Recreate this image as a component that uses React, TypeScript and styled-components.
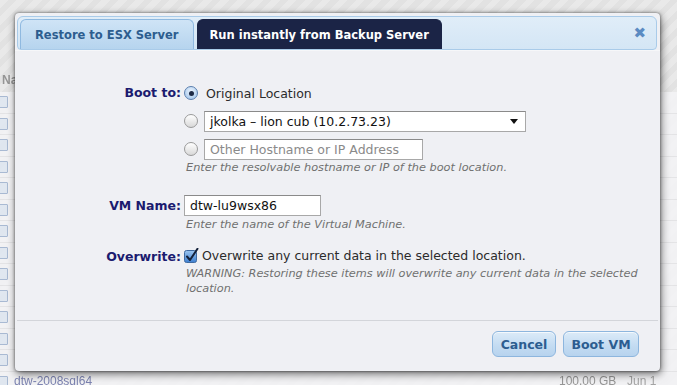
import React from "react";
import styled, { createGlobalStyle } from "styled-components";

const Global = createGlobalStyle`
  html, body { margin: 0; padding: 0; }
  body { width: 677px; height: 385px; overflow: hidden; font-family: "DejaVu Sans", "Noto Sans", sans-serif; }
`;

const Page = styled.div`
  position: relative;
  width: 677px;
  height: 385px;
  overflow: hidden;
  background: repeating-linear-gradient(135deg, #e9e9e9 0 6px, #e2e2e2 6px 12px);
`;

const BgTable = styled.div`
  display: flex;
  flex-direction: column;
  padding-top: 72px;
  filter: blur(0.6px);
  opacity: 0.85;
`;

const BgHead = styled.div`
  height: 20px;
  padding-left: 2px;
  font: bold 12px "Liberation Sans", sans-serif;
  color: #888;
  line-height: 16px;
`;

const BgRow = styled.div`
  height: 21.5px;
  box-sizing: border-box;
  flex: none;
  display: flex;
  align-items: center;
  font: 12px/13px "Liberation Sans", sans-serif;
  color: #6a72a8;
  border-bottom: 1px solid #e4e4e6;
  background: #f4f4f6;
`;

const BgIcon = styled.span`
  width: 8px;
  height: 10px;
  margin-left: -2px;
  border: 1px solid #9fb2d0;
  background: #dfe7f2;
  border-radius: 1px;
`;

const BgName = styled.span`
  margin-left: 6px;
  width: 545px;
`;

const BgSize = styled.span`
  width: 68px;
  color: #888;
`;

const BgDate = styled.span`
  color: #999;
`;

const Dialog = styled.div`
  position: absolute;
  left: 15px;
  top: 13px;
  width: 645px;
  height: 358px;
  box-sizing: border-box;
  background: #eff0f4;
  border-radius: 4px;
  box-shadow: 0 0 3px rgba(0,0,0,0.55), 1px 3px 8px rgba(0,0,0,0.55);
  display: flex;
  flex-direction: column;
  overflow: hidden;
`;

const TabBar = styled.div`
  margin: 3px 3px 0 2px;
  height: 34px;
  box-sizing: border-box;
  background: linear-gradient(#e0edf8, #d4e6f5);
  border: 1px solid #a9cbe9;
  border-radius: 6px 6px 4px 4px;
  display: flex;
  align-items: flex-end;
  padding: 0 0 0 2px;
  gap: 3px;
`;

const Tab = styled.div<{ $active?: boolean }>`
  height: 30px;
  box-sizing: border-box;
  padding: 0 ${(p) => (p.$active ? "12px" : "14px")};
  display: flex;
  align-items: center;
  font-family: "DejaVu Sans", sans-serif;
  font-weight: bold;
  font-size: 11.5px;
  border-radius: 6px 6px 0 0;
  border: 1px solid ${(p) => (p.$active ? "#1a2446" : "#8fb9e0")};
  border-bottom: none;
  color: ${(p) => (p.$active ? "#ffffff" : "#2d5d8f")};
  background: ${(p) => (p.$active ? "#1b2446" : "linear-gradient(#cfe4f6, #b6d4ee)")};
`;

const Close = styled.div`
  margin-left: auto;
  align-self: center;
  margin-right: 10px;
  color: #5b8bc2;
  font: bold 15px "DejaVu Sans", sans-serif;
  line-height: 1;
`;

const Body = styled.div`
  flex: 1;
  display: grid;
  grid-template-columns: 166px 1fr;
  column-gap: 3px;
  align-content: start;
  padding-top: 28px;
  border-top: 1px solid #f6f7f9;
`;

const Label = styled.div<{ $top: number }>`
  text-align: right;
  font: bold 12.5px "DejaVu Sans", sans-serif;
  color: #1b1b6f;
  padding-top: ${(p) => p.$top}px;
  line-height: 15px;
`;

const Field = styled.div<{ $mb: number }>`
  display: flex;
  flex-direction: column;
  margin-bottom: ${(p) => p.$mb}px;
`;

const Line = styled.div<{ $h: number }>`
  height: ${(p) => p.$h}px;
  display: flex;
  align-items: center;
  gap: 6px;
`;

const Radio = styled.span<{ $checked?: boolean }>`
  width: 14px;
  height: 14px;
  box-sizing: border-box;
  border-radius: 50%;
  flex: none;
  display: flex;
  align-items: center;
  justify-content: center;
  border: 1px solid ${(p) => (p.$checked ? "#5b7fae" : "#9a9a9a")};
  background: ${(p) =>
    p.$checked
      ? "radial-gradient(circle at 50% 35%, #e8f2fc, #9cc2ea)"
      : "linear-gradient(#ffffff, #d8d8d8)"};
  &::after {
    content: "";
    width: 5px;
    height: 5px;
    border-radius: 50%;
    background: #1d2a45;
    display: ${(p) => (p.$checked ? "block" : "none")};
  }
`;

const OptText = styled.span<{ $ml?: number }>`
  font: 12.5px "DejaVu Sans", sans-serif;
  color: #2b2b2b;
  margin-left: ${(p) => p.$ml ?? 2}px;
`;

const Box = styled.div<{ $w: number }>`
  width: ${(p) => p.$w}px;
  height: 21px;
  box-sizing: border-box;
  border: 1px solid #a8a8a8;
  border-top-color: #8a8a8a;
  background: #ffffff;
  display: flex;
  align-items: center;
  padding: 0 5px;
  font: 12.5px "DejaVu Sans", sans-serif;
  color: #111;
`;

const Placeholder = styled.span`
  color: #8a8a8a;
`;

const Arrow = styled.span`
  margin-left: auto;
  margin-right: 2px;
  width: 0;
  height: 0;
  border-left: 4px solid transparent;
  border-right: 4px solid transparent;
  border-top: 5px solid #111;
`;

const Hint = styled.div<{ $mt?: number }>`
  font: italic 11.3px "DejaVu Sans", sans-serif;
  color: #707070;
  line-height: 15px;
  margin-left: 2px;
  margin-top: ${(p) => p.$mt ?? 0}px;
  max-width: 462px;
`;

const Footer = styled.div`
  border-top: 1px solid #d3d5da;
  margin: 0 2px;
  height: 51px;
  box-sizing: border-box;
  display: flex;
  justify-content: flex-end;
  align-items: flex-start;
  padding: 10px 19px 0 0;
  gap: 7px;
`;

const Button = styled.button<{ $w: number }>`
  width: ${(p) => p.$w}px;
  height: 26px;
  border: 1px solid #8db6de;
  border-radius: 6px;
  background: linear-gradient(#dcebf8, #c4dcf2 55%, #b7d3ee);
  color: #2c5d90;
  font: bold 12.5px "DejaVu Sans", sans-serif;
  padding: 0;
  box-shadow: inset 0 1px 0 rgba(255,255,255,0.7);
`;

const CheckSvg = () => (
  <svg width="15" height="15" viewBox="0 0 15 15" style={{ flex: "none" }}>
    <defs>
      <linearGradient id="cb" x1="0" y1="0" x2="0" y2="1">
        <stop offset="0" stopColor="#9cc6f0" />
        <stop offset="1" stopColor="#3d7fd0" />
      </linearGradient>
    </defs>
    <rect x="0.5" y="2.5" width="12" height="12" rx="2" fill="url(#cb)" stroke="#3f6aa0" />
    <path d="M3 8.5 L6 12 L13.5 0.8" fill="none" stroke="#14213a" strokeWidth="2" strokeLinecap="round" strokeLinejoin="round" />
  </svg>
);

const rows = Array.from({ length: 14 }, (_, i) => i);

export default function App() {
  return (
    <Page>
      <Global />
      <BgTable>
        <BgHead>Nam</BgHead>
        {rows.map((i) => (
          <BgRow key={i}>
            <BgIcon />
            {i === 13 && (
              <>
                <BgName>dtw-2008sql64</BgName>
                <BgSize>100.00 GB</BgSize>
                <BgDate>Jun 1</BgDate>
              </>
            )}
          </BgRow>
        ))}
      </BgTable>
      <Dialog>
        <TabBar>
          <Tab>Restore to ESX Server</Tab>
          <Tab $active>Run instantly from Backup Server</Tab>
          <Close>✖</Close>
        </TabBar>
        <Body>
          <Label $top={6}>Boot to:</Label>
          <Field $mb={18}>
            <Line $h={28}>
              <Radio $checked />
              <OptText>Original Location</OptText>
            </Line>
            <Line $h={28}>
              <Radio />
              <Box $w={322}>
                jkolka – lion cub (10.2.73.23)
                <Arrow />
              </Box>
            </Line>
            <Line $h={28}>
              <Radio />
              <Box $w={219}>
                <Placeholder>Other Hostname or IP Address</Placeholder>
              </Box>
            </Line>
            <Hint $mt={-3}>Enter the resolvable hostname or IP of the boot location.</Hint>
          </Field>

          <Label $top={5}>VM Name:</Label>
          <Field $mb={12}>
            <Line $h={24}>
              <Box $w={137}>dtw-lu9wsx86</Box>
            </Line>
            <Hint>Enter the name of the Virtual Machine.</Hint>
          </Field>

          <Label $top={5}>Overwrite:</Label>
          <Field $mb={0}>
            <Line $h={22}>
              <CheckSvg />
              <OptText $ml={-3}>Overwrite any current data in the selected location.</OptText>
            </Line>
            <Hint>WARNING: Restoring these items will overwrite any current data in the selected location.</Hint>
          </Field>
        </Body>
        <Footer>
          <Button $w={64}>Cancel</Button>
          <Button $w={76}>Boot VM</Button>
        </Footer>
      </Dialog>
    </Page>
  );
}
